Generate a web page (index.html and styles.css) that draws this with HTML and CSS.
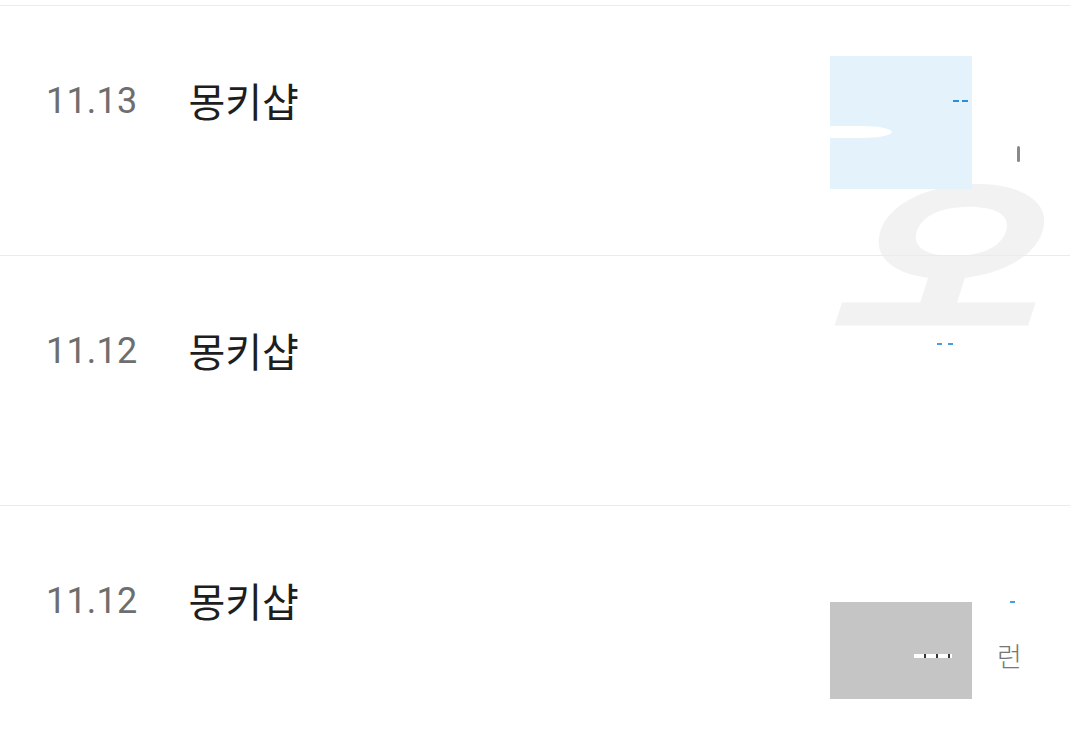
FILE: index.html
```html
<!DOCTYPE html>
<html lang="ko">
<head>
<meta charset="utf-8">
<link rel="stylesheet" href="styles.css">
</head>
<body>
<div class="list">
  <div class="row">
    <div class="line">
      <span class="date">11.13</span>
      <span class="name">몽키샵</span>
    </div>
    <div class="thumb thumb-blue">
      <span class="notch"></span>
      <span class="dash dash-a"></span>
      <span class="dash dash-b"></span>
    </div>
    <span class="mark"></span>
    <span class="ghost">오</span>
  </div>
  <div class="row">
    <div class="line">
      <span class="date">11.12</span>
      <span class="name">몽키샵</span>
    </div>
    <span class="dot dot-a"></span>
    <span class="dot dot-b"></span>
  </div>
  <div class="row row-last">
    <div class="line">
      <span class="date">11.12</span>
      <span class="name">몽키샵</span>
    </div>
    <div class="thumb thumb-gray">
      <span class="wdash"></span>
    </div>
    <span class="dot dot-c"></span>
    <span class="tiny">런</span>
  </div>
</div>
</body>
</html>
```
FILE: styles.css
```css
html, body {
  margin: 0;
  padding: 0;
  background: #ffffff;
}
body {
  width: 1070px;
  height: 741px;
  overflow: hidden;
  font-family: "Noto Sans CJK KR", "Noto Sans", sans-serif;
}
.list {
  padding-top: 5px;
}
.row {
  position: relative;
  height: 250px;
  border-top: 1px solid #ebebeb;
  box-sizing: border-box;
  padding-left: 46px;
  padding-top: 70px;
}
.line {
  display: flex;
  align-items: center;
  gap: 51px;
  height: 50px;
  position: relative;
  z-index: 2;
}
.date {
  font-family: Roboto, "Liberation Sans", sans-serif;
  font-size: 36px;
  color: #6e6e6e;
  letter-spacing: 0.2px;
}
.name {
  font-family: "Noto Sans CJK KR", sans-serif;
  font-weight: 400;
  font-size: 40px;
  color: #1e1e1e;
  position: relative;
  top: -1px;
}
.thumb {
  position: absolute;
  left: 830px;
  width: 142px;
}
.thumb-blue {
  top: 50px;
  height: 133px;
  background: #e3f2fb;
  z-index: 1;
}
.notch {
  position: absolute;
  left: 0;
  top: 70px;
  width: 62px;
  height: 12px;
  background: #ffffff;
  border-radius: 0 50% 50% 0;
}
.dash {
  position: absolute;
  top: 44px;
  height: 2px;
  background: #2f8fd6;
}
.dash-a { left: 123px; width: 6px; }
.dash-b { left: 132px; width: 6px; }
.mark {
  position: absolute;
  left: 1017px;
  top: 140px;
  width: 3px;
  height: 16px;
  background: #8a8a8a;
  border-radius: 2px;
}
.ghost {
  position: absolute;
  left: 826px;
  top: 155px;
  font-size: 178px;
  line-height: 1;
  font-weight: 900;
  color: #f2f2f2;
  font-style: italic;
  transform: scaleX(1.28);
  transform-origin: left top;
  z-index: 0;
}
.dot {
  position: absolute;
  height: 2px;
  width: 5px;
  background: #4a9de0;
}
.dot-a { left: 937px; top: 87px; }
.dot-b { left: 948px; top: 87px; }
.dot-c { left: 1010px; top: 95px; }
.thumb-gray {
  top: 96px;
  height: 97px;
  background: #c5c5c5;
}
.wdash {
  position: absolute;
  left: 84px;
  top: 52px;
  width: 38px;
  height: 4px;
  background: repeating-linear-gradient(90deg, #ffffff 0 10px, #333333 10px 12px);
}
.tiny {
  position: absolute;
  left: 997px;
  top: 136px;
  font-size: 27px;
  line-height: 1;
  font-weight: 300;
  color: #777777;
}
```
